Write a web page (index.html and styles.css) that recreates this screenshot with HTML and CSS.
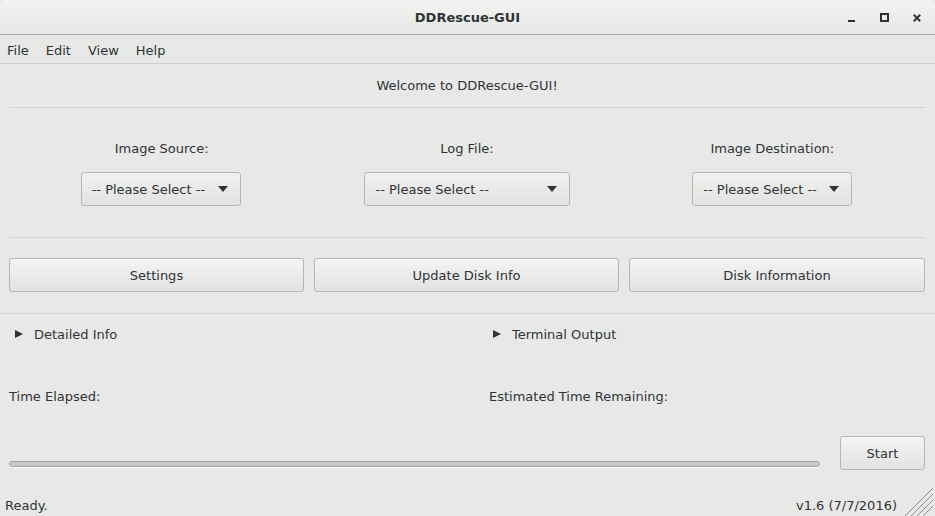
FILE: index.html
```html
<!DOCTYPE html>
<html lang="en">
<head>
    <meta charset="UTF-8">
    <title>DDRescue-GUI</title>
    <link rel="stylesheet" href="styles.css">
</head>
<body>
    <div class="window">
        <div class="titlebar">
            <span class="title">DDRescue-GUI</span>
            <div class="win-controls">
                <svg class="win-btn" width="8" height="8" viewBox="0 0 8 8"><rect x="0" y="6" width="7" height="2" fill="#2e3436"/></svg>
                <svg class="win-btn" width="9" height="9" viewBox="0 0 9 9"><rect x="1" y="1" width="7" height="7" fill="none" stroke="#2e3436" stroke-width="2"/></svg>
                <svg class="win-btn" width="8" height="8" viewBox="0 0 8 8"><path d="M0.8 0.8 L7.2 7.2 M7.2 0.8 L0.8 7.2" stroke="#2e3436" stroke-width="2"/></svg>
            </div>
        </div>

        <div class="menubar">
            <span class="menu-item">File</span>
            <span class="menu-item">Edit</span>
            <span class="menu-item">View</span>
            <span class="menu-item">Help</span>
        </div>

        <div class="content">
            <div class="welcome">Welcome to DDRescue-GUI!</div>
            <div class="separator"></div>

            <div class="selectors">
                <div class="selector">
                    <div class="selector-label">Image Source:</div>
                    <div class="combo combo-source">
                        <span>-- Please Select --</span>
                        <span class="combo-arrow"></span>
                    </div>
                </div>
                <div class="selector">
                    <div class="selector-label">Log File:</div>
                    <div class="combo combo-log">
                        <span>-- Please Select --</span>
                        <span class="combo-arrow"></span>
                    </div>
                </div>
                <div class="selector">
                    <div class="selector-label">Image Destination:</div>
                    <div class="combo combo-dest">
                        <span>-- Please Select --</span>
                        <span class="combo-arrow"></span>
                    </div>
                </div>
            </div>

            <div class="separator"></div>

            <div class="buttons">
                <div class="btn">Settings</div>
                <div class="btn">Update Disk Info</div>
                <div class="btn">Disk Information</div>
            </div>

            <div class="separator sep-full"></div>

            <div class="expanders">
                <div class="expander"><span class="exp-arrow"></span>Detailed Info</div>
                <div class="expander"><span class="exp-arrow"></span>Terminal Output</div>
            </div>

            <div class="times">
                <div class="time">Time Elapsed:</div>
                <div class="time">Estimated Time Remaining:</div>
            </div>

            <div class="progress-row">
                <div class="progress"></div>
                <div class="btn btn-start">Start</div>
            </div>
        </div>

        <div class="statusbar">
            <span class="status-text">Ready.</span>
            <span class="version">v1.6 (7/7/2016)</span>
            <svg class="grip" width="28" height="30" viewBox="0 0 28 30">
                <path d="M0 30 L28 2 M6 30 L28 8 M12 30 L28 14 M18 30 L28 20" stroke="#8e8e8c" stroke-width="1"/>
            </svg>
        </div>
    </div>
</body>
</html>
```

FILE: styles.css
```css
* {
    margin: 0;
    padding: 0;
    box-sizing: border-box;
}

body {
    font-family: 'DejaVu Sans', sans-serif;
    font-size: 13px;
    color: #2e3436;
    background: #e8e8e7;
    width: 935px;
    height: 516px;
    overflow: hidden;
}

.window {
    height: 516px;
    display: flex;
    flex-direction: column;
    background: #e8e8e7;
}

.titlebar {
    height: 35px;
    flex: none;
    display: flex;
    align-items: center;
    justify-content: center;
    background: linear-gradient(#f3f3f2, #e7e7e6);
    border-bottom: 1px solid #a8a8a6;
    border-radius: 6px 6px 0 0;
    position: relative;
}

.title {
    font-weight: bold;
    font-size: 13px;
    color: #2e3436;
    margin-top: 1px;
}

.win-controls {
    position: absolute;
    left: 848px;
    top: 13px;
    display: flex;
    align-items: flex-end;
    gap: 24px;
}

.menubar {
    height: 29px;
    flex: none;
    display: flex;
    align-items: center;
    padding-left: 7px;
    padding-top: 3px;
    gap: 17px;
    border-bottom: 1px solid #cfcfcd;
    background: #e8e8e7;
}

.menu-item {
    font-size: 13px;
}

.content {
    flex: 1;
    display: flex;
    flex-direction: column;
    padding: 0 10px 0 9px;
}

.welcome {
    text-align: center;
    height: 43px;
    line-height: 43px;
}

.separator {
    height: 1px;
    background: #d3d3d1;
    flex: none;
}

.sep-full {
    margin: 0 -10px 0 -9px;
}

.selectors {
    display: grid;
    grid-template-columns: 1fr 1fr 1fr;
    height: 129px;
    padding-top: 33px;
}

.selector {
    display: flex;
    flex-direction: column;
    align-items: center;
}

.selector-label {
    height: 31px;
}

.combo {
    height: 34px;
    border: 1px solid #b6b6b3;
    border-radius: 3px;
    background: linear-gradient(#f0f0ef, #e2e2e1);
    display: flex;
    align-items: center;
    justify-content: space-between;
    padding: 0 12px 0 10px;
}

.combo-source,
.combo-dest {
    width: 160px;
}

.combo-source {
    margin-left: -2px;
}

.combo-log {
    width: 206px;
    margin-left: 1px;
}

.combo-arrow {
    width: 0;
    height: 0;
    border-left: 5px solid transparent;
    border-right: 5px solid transparent;
    border-top: 6px solid #2e3436;
}

.buttons {
    display: grid;
    grid-template-columns: 295px 305px 296px;
    gap: 10px;
    padding: 20px 0 21px;
}

.btn {
    height: 34px;
    border: 1px solid #b6b6b3;
    border-radius: 3px;
    background: linear-gradient(#f4f4f3, #e2e2e1);
    display: flex;
    align-items: center;
    justify-content: center;
}

.expanders {
    display: grid;
    grid-template-columns: 480px 1fr;
    height: 40px;
    align-items: center;
}

.expander {
    display: flex;
    align-items: center;
    padding-left: 6px;
}

.expander + .expander {
    padding-left: 4px;
}

.exp-arrow {
    width: 0;
    height: 0;
    border-top: 4.5px solid transparent;
    border-bottom: 4.5px solid transparent;
    border-left: 8px solid #2e3436;
    margin-right: 11px;
}

.times {
    display: grid;
    grid-template-columns: 480px 1fr;
    height: 51px;
    align-items: end;
    padding-bottom: 1px;
}

.progress-row {
    display: flex;
    align-items: flex-end;
    padding-top: 31px;
}

.progress {
    width: 811px;
    height: 6px;
    border: 1px solid #a4a4a2;
    border-radius: 3px;
    background: #c8c8c6;
    margin-bottom: 3px;
    box-shadow: 0 1px 0 #ffffff;
}

.btn-start {
    width: 85px;
    margin-left: 20px;
}

.statusbar {
    height: 30px;
    flex: none;
    display: flex;
    align-items: center;
    padding-left: 5px;
    padding-top: 8px;
    margin-top: auto;
}

.status-text {
    flex: 1;
}

.version {
    margin-right: 8px;
}

.grip {
    align-self: flex-end;
    margin-right: 2px;
    margin-top: -8px;
}
```
